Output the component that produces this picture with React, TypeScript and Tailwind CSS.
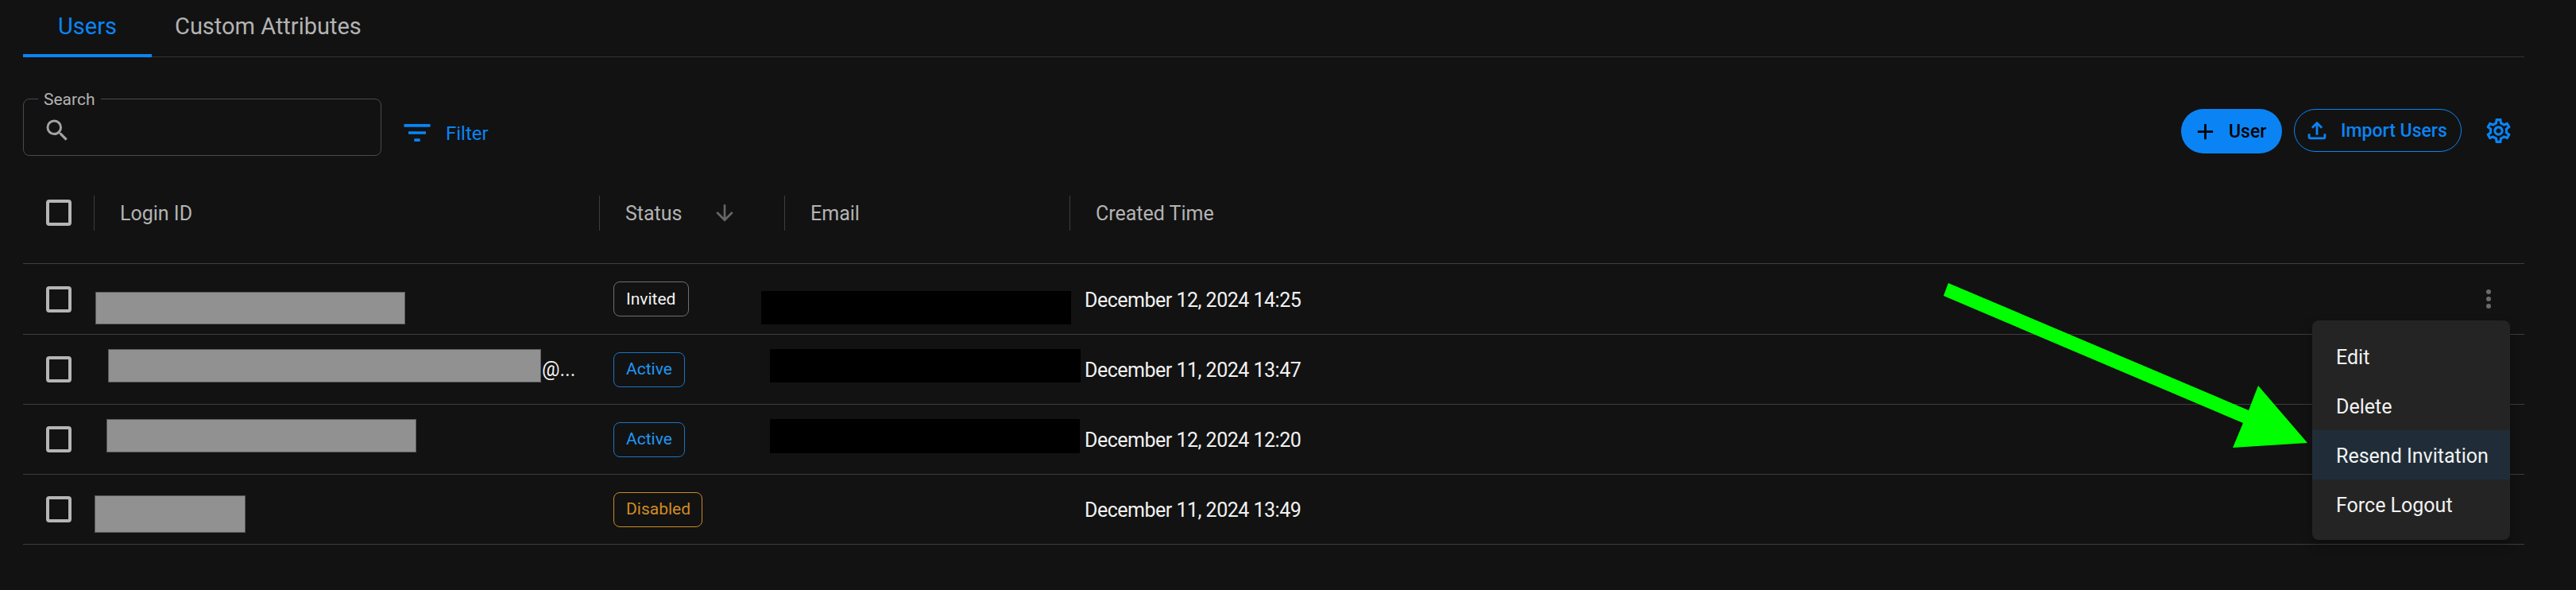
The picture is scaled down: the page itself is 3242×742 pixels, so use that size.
import React from 'react';
import { MdAdd, MdArrowDownward, MdFilterList, MdOutlineFileUpload, MdOutlineSettings, MdSearch } from 'react-icons/md';

interface UserRow {
  height: string;
  status: string;
  badge: string;
  created: string;
  loginMask: string;
  emailMask?: string;
  loginSuffix?: string;
}

const rows: UserRow[] = [
  {
    height: 'h-[89px]',
    status: 'Invited',
    badge: 'w-[95px] border-[#6f6f6f] text-[#f2f2f2]',
    created: 'December 12, 2024 14:25',
    loginMask: 'left-[91px] top-[35px] w-[390px] h-[41px]',
    emailMask: 'left-[929px] top-[34px] w-[390px] h-[42px]',
  },
  {
    height: 'h-[88px]',
    status: 'Active',
    badge: 'w-[90px] border-[#1a74c4] text-[#2196f3]',
    created: 'December 11, 2024 13:47',
    loginMask: 'left-[107px] top-[18px] w-[545px] h-[42px]',
    emailMask: 'left-[940px] top-[18px] w-[391px] h-[42px]',
    loginSuffix: '@...',
  },
  {
    height: 'h-[88px]',
    status: 'Active',
    badge: 'w-[90px] border-[#1a74c4] text-[#2196f3]',
    created: 'December 12, 2024 12:20',
    loginMask: 'left-[105px] top-[18px] w-[390px] h-[42px]',
    emailMask: 'left-[940px] top-[18px] w-[390px] h-[43px]',
  },
  {
    height: 'h-[88px]',
    status: 'Disabled',
    badge: 'w-[112px] border-[#c98a24] text-[#d08c22]',
    created: 'December 11, 2024 13:49',
    loginMask: 'left-[90px] top-[26px] w-[190px] h-[47px]',
  },
];

function Checkbox() {
  return <div className="h-[33px] w-[32px] shrink-0 rounded-[4px] border-[4px] border-[#b5b5b5]" />;
}

function HeaderCell({ width, label, children }: { width: string; label?: string; children?: React.ReactNode }) {
  return (
    <div className={`flex items-center ${width}`}>
      <div className="h-[44px] w-px bg-[#3d3d3d]" />
      <span className="ml-[32px] pt-[2px] text-[#b3b3b3]">{label}</span>
      {children}
    </div>
  );
}

export default function App() {
  return (
    <div className="relative h-[742px] w-[3242px] overflow-hidden bg-[#121212] pl-[29px] pr-[65px] font-['Roboto',sans-serif] text-[25px]">
      {/* tabs */}
      <div className="flex h-[72px] border-b border-[#333333] text-[29px]">
        <div className="-mb-px flex h-[72px] w-[162px] items-start justify-center border-b-[4px] border-[#0a84f5] pt-[12px] text-[#0a84f5]">
          Users
        </div>
        <div className="ml-[29px] pt-[12px] text-[#b3b3b3]">Custom Attributes</div>
      </div>

      {/* toolbar */}
      <div className="mt-[52px] flex h-[72px] items-start">
        <div className="relative h-[72px] w-[451px] rounded-[8px] border border-[#4a4a4a] pl-[29px] pt-[21px]">
          <span className="absolute -top-[13px] left-[18px] bg-[#121212] px-[7px] text-[21px] leading-[26px] text-[#b3b3b3]">
            Search
          </span>
          <MdSearch size={36} className="-ml-[5px] text-[#a3a3a3]" />
        </div>
        <div className="ml-[23px] mt-[21px] flex items-center text-[#0a84f5]">
          <MdFilterList size={44} />
          <span className="ml-[14px] pt-[2px] text-[24px]">Filter</span>
        </div>
        <div className="ml-auto mr-[14px] mt-[13px] flex items-start">
          <button className="flex h-[56px] w-[127px] items-center rounded-full bg-[#0a84f5] pl-[14px] text-[23px] font-medium text-black">
            <MdAdd size={33} />
            <span className="ml-[13px] pt-[2px]">User</span>
          </button>
          <button className="ml-[15px] flex h-[54px] w-[211px] items-center rounded-full border border-[#0a84f5] pl-[11px] text-[23px] font-medium text-[#0a84f5]">
            <MdOutlineFileUpload size={34} />
            <span className="ml-[13px] pt-[2px]">Import Users</span>
          </button>
          <MdOutlineSettings size={37} className="ml-[28px] mt-[9px] text-[#0a84f5]" />
        </div>
      </div>

      {/* table header */}
      <div className="mt-[8px] flex h-[128px] items-center border-b border-[#3d3d3d]">
        <div className="flex w-[89px] pl-[29px]">
          <Checkbox />
        </div>
        <HeaderCell width="w-[636px]" label="Login ID" />
        <HeaderCell width="w-[233px]" label="Status">
          <MdArrowDownward size={32} className="ml-[38px] text-[#666666]" />
        </HeaderCell>
        <HeaderCell width="w-[359px]" label="Email" />
        <HeaderCell width="flex-1" label="Created Time" />
      </div>

      {/* rows */}
      {rows.map((row) => (
        <div key={row.created} className={`relative flex items-center border-b border-[#3d3d3d] ${row.height}`}>
          <div className="flex w-[89px] pl-[29px]">
            <Checkbox />
          </div>
          <div className="w-[636px] pl-[564px] text-[25px] text-[#f2f2f2]">{row.loginSuffix}</div>
          <div className="w-[233px] pl-[18px]">
            <div className={`flex h-[44px] items-center rounded-[8px] border pl-[15px] pt-[1px] text-[21px] ${row.badge}`}>
              {row.status}
            </div>
          </div>
          <div className="w-[359px]" />
          <div className="pl-[19px] pt-[3px] text-[25px] tracking-[-0.5px] text-[#f2f2f2]">{row.created}</div>
          {/* redactions painted over the screenshot */}
          <div className={`absolute border border-[#5a5a5a] bg-[#919191] ${row.loginMask}`} />
          {row.emailMask && <div className={`absolute bg-black ${row.emailMask}`} />}
        </div>
      ))}

      {/* row actions */}
      <svg className="absolute left-[3127px] top-[364px]" width="10" height="24" viewBox="0 0 10 24" fill="#6b6b6b">
        <circle cx="5" cy="3" r="3" />
        <circle cx="5" cy="12" r="3" />
        <circle cx="5" cy="21" r="3" />
      </svg>

      <div className="absolute left-[2910px] top-[403px] w-[249px] rounded-[8px] bg-[#242424] py-[14px] text-[25px] text-[#f2f2f2] shadow-[0_6px_14px_rgba(0,0,0,0.3)]">
        <div className="flex h-[62px] items-center pl-[30px] pt-[3px]">Edit</div>
        <div className="flex h-[62px] items-center pl-[30px] pt-[3px]">Delete</div>
        <div className="flex h-[62px] items-center bg-[#202d38] pl-[30px] pt-[3px]">Resend Invitation</div>
        <div className="flex h-[62px] items-center pl-[30px] pt-[3px]">Force Logout</div>
      </div>

      {/* annotation arrow */}
      <svg className="absolute left-0 top-0" width="3242" height="742" viewBox="0 0 3242 742">
        <polygon points="2452,356 2446,372 2823,532 2810,563 2904,557 2842,485 2830,516" fill="#00ff00" />
      </svg>
    </div>
  );
}
